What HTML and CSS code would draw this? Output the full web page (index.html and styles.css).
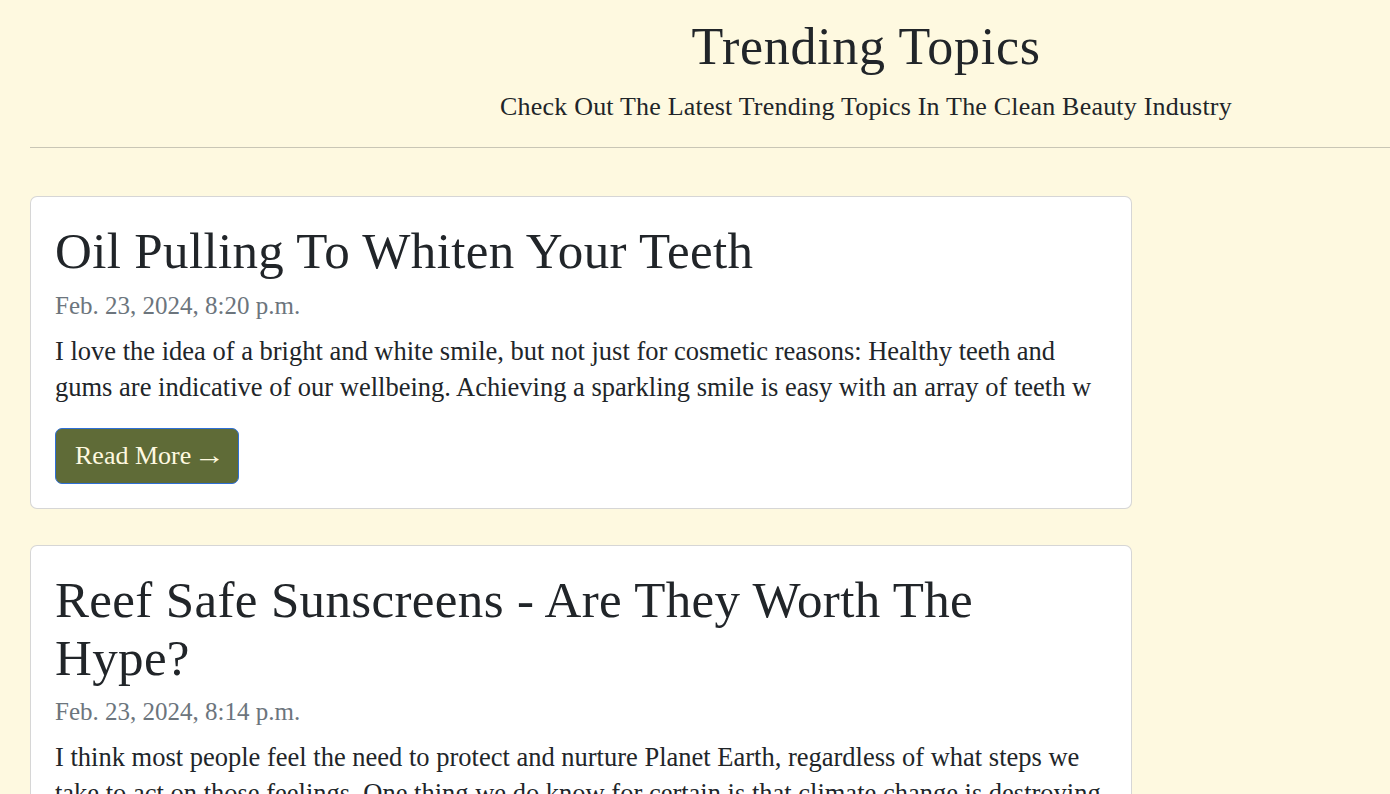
FILE: index.html
```html
<!DOCTYPE html>
<html lang="en">
<head>
<meta charset="utf-8">
<title>Trending Topics</title>
<link rel="stylesheet" href="styles.css">
</head>
<body>
<main class="page">
  <header class="hero">
    <h1 class="hero-title">Trending Topics</h1>
    <p class="hero-lead">Check Out The Latest Trending Topics In The Clean Beauty Industry</p>
  </header>
  <hr class="divider">
  <section class="posts">
    <article class="card">
      <h2 class="card-title">Oil Pulling To Whiten Your Teeth</h2>
      <p class="card-date">Feb. 23, 2024, 8:20 p.m.</p>
      <p class="card-text">I love the idea of a bright and white smile, but not just for cosmetic reasons: Healthy teeth and<br>gums are indicative of our wellbeing. Achieving a sparkling smile is easy with an array of teeth w</p>
      <a class="btn" href="#">Read More <span class="arrow">&rarr;</span></a>
    </article>
    <article class="card">
      <h2 class="card-title">Reef Safe Sunscreens - Are They Worth The Hype?</h2>
      <p class="card-date">Feb. 23, 2024, 8:14 p.m.</p>
      <p class="card-text">I think most people feel the need to protect and nurture Planet Earth, regardless of what steps we<br>take to act on those feelings. One thing we do know for certain is that climate change is destroying</p>
      <a class="btn" href="#">Read More <span class="arrow">&rarr;</span></a>
    </article>
  </section>
</main>
</body>
</html>
```
FILE: styles.css
```css
html, body {
  margin: 0;
  padding: 0;
}
body {
  background: #fef9e0;
  color: #212529;
  font-family: "Liberation Serif", "Times New Roman", serif;
}
.page {
  padding-left: 30px;
}
.hero {
  padding-left: 312px;
  text-align: center;
}
.hero-title {
  margin: 16px 0 9px;
  font-size: 52px;
  font-weight: 400;
  line-height: 1.2;
  letter-spacing: 0.7px;
}
.hero-lead {
  margin: 0;
  font-size: 26px;
  line-height: 39px;
  letter-spacing: 0.2px;
}
.divider {
  margin: 21px 0 48px;
  border: 0;
  border-top: 1px solid #c9c6b5;
  height: 0;
}
.posts {
  width: 1102px;
  display: flex;
  flex-direction: column;
  gap: 36px;
}
.card {
  background: #fff;
  border: 1px solid rgba(0, 0, 0, 0.16);
  border-radius: 7px;
  padding: 26px 24px 24px;
  display: flex;
  flex-direction: column;
  align-items: flex-start;
}
.card-title {
  margin: 0 0 10px;
  font-size: 51px;
  font-weight: 400;
  line-height: 57.6px;
  letter-spacing: 0.35px;
}
.card-date {
  margin: 0 0 12px;
  font-size: 25px;
  line-height: 30px;
  color: #6c757d;
}
.card-text {
  margin: 0 0 23px;
  font-size: 26.5px;
  line-height: 36px;
  white-space: nowrap;
}
.btn {
  display: inline-flex;
  align-items: center;
  gap: 3px;
  box-sizing: border-box;
  height: 56px;
  padding: 0 18px 0 19px;
  background: #5f6b37;
  color: #fef9e0;
  border: 1px solid #2f6fd6;
  border-radius: 7px;
  font-size: 26px;
  text-decoration: none;
}
.arrow {
  display: inline-block;
  transform: scaleX(1.2);
  transform-origin: left center;
}
```
